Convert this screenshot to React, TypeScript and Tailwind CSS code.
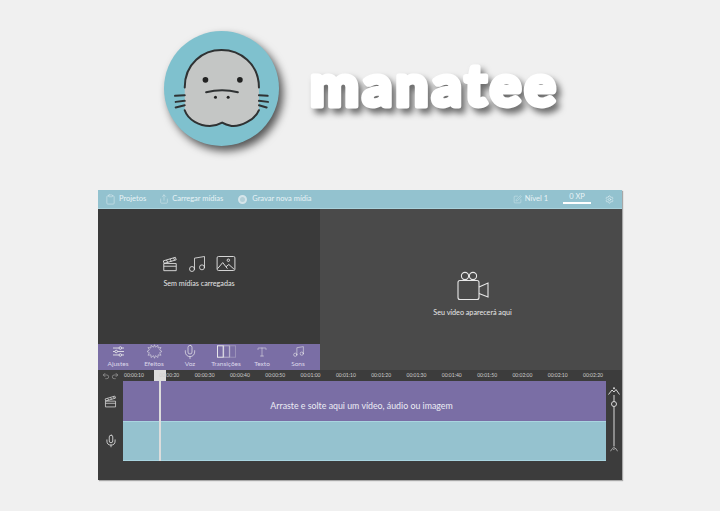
import React from "react";
import { Clipboard, Share, Music, Mic, Type, Settings, SquarePen, Undo2, Redo2 } from "lucide-react";

const RULER = ["00:00:10", "00:00:20", "00:00:30", "00:00:40", "00:00:50", "00:01:00", "00:01:10", "00:01:20", "00:01:30", "00:01:40", "00:01:50", "00:02:00", "00:02:10", "00:02:20"];

const Manatee = () => (
  <svg viewBox="0 0 344 344" className="w-full h-full">
    <g transform="translate(-13 -3)" fill="none" stroke="#2f3233" strokeLinecap="round">
      <path d="M75 172C75 100 130 60 185 60C240 60 297 100 297 172L297 240C285 270 240 290 215 287C205 285 195 282 187 277C178 282 165 287 150 287C120 287 85 270 75 240Z" fill="#c4c6c5" stroke="none" />
      <path d="M75 172C75 100 130 60 185 60C240 60 297 100 297 172" strokeWidth="6" />
      <path d="M297 240C285 270 240 290 215 287C205 285 195 282 187 277C178 282 165 287 150 287C120 287 85 270 75 240" strokeWidth="6" />
      <path d="M139 186Q187 174 234 186" strokeWidth="6" />
      <path d="M46 197L75 195M48 215L75 212M48 232L75 225M297 195L323 197M297 212L324 215M297 225L320 232" strokeWidth="6" />
      <g fill="#222" stroke="none">
        <circle cx="137" cy="149" r="8.5" />
        <circle cx="240" cy="149" r="8.5" />
        <circle cx="167" cy="201" r="4.5" />
        <circle cx="205" cy="201" r="4.5" />
      </g>
    </g>
  </svg>
);

const Wordmark = () => (
  <svg width="260" height="70" className="overflow-visible [filter:drop-shadow(4px_5px_3px_rgba(0,0,0,0.55))]">
    <text x="5" y="51" fontFamily="Lato, sans-serif" fontWeight="900" fontSize="58" letterSpacing="3.5" fill="#fff" stroke="#fff" strokeWidth="5" strokeLinejoin="round">
      manatee
    </text>
  </svg>
);

const Clapper = ({ className = "" }: { className?: string }) => (
  <svg viewBox="0 0 18 18" fill="none" stroke="currentColor" strokeWidth="1" className={className}>
    <path d="M2 8.5h14v8H2z" />
    <path d="M2 11.5h14" />
    <path d="M1.5 5.5L15 1.5l1 2.8L2.4 8.3z" />
    <path d="M5 4.5l1.5 2.7M9 3.3l1.5 2.7M13 2.2l1.2 2.6" />
  </svg>
);

const Picture = ({ className = "" }: { className?: string }) => (
  <svg viewBox="0 0 20 16" fill="none" stroke="currentColor" strokeWidth="1" className={className}>
    <rect x="0.5" y="0.5" width="19" height="15" rx="1.5" />
    <path d="M1 13.5L6.5 7l5 6.5M10 11.5l3-2.5 5.5 5" />
    <circle cx="12.5" cy="4.5" r="1.3" />
  </svg>
);

const Camera = ({ className = "" }: { className?: string }) => (
  <svg viewBox="0 0 32 30" fill="none" stroke="currentColor" strokeWidth="1.1" className={className}>
    <circle cx="8" cy="5" r="3.6" />
    <circle cx="16" cy="5" r="3.6" />
    <rect x="1" y="9.5" width="21" height="19" rx="2" />
    <path d="M22 16l9-4v14l-9-3.5" />
  </svg>
);

const Sliders = ({ className = "" }: { className?: string }) => (
  <svg viewBox="0 0 12 11" fill="none" stroke="currentColor" strokeWidth="0.9" className={className}>
    <path d="M0 1.7h6.5M9.5 1.7H12M0 5.5h2M5 5.5h7M0 9.3h6.5M9.5 9.3H12" />
    <circle cx="8" cy="1.7" r="1.4" />
    <circle cx="3.5" cy="5.5" r="1.4" />
    <circle cx="8" cy="9.3" r="1.4" />
  </svg>
);

const Burst = ({ className = "" }: { className?: string }) => (
  <svg viewBox="0 0 20 20" fill="none" stroke="currentColor" strokeWidth="0.7" className={className}>
    <path d="M10 1l1.4 3.3L14.5 1.8l.3 3.5 3.9-.6-1.9 3.2L20 10l-3.2 1.6 1.9 3.4-3.9-.6-.3 3.6-3.1-2.5L10 19l-1.4-3.5-3.1 2.5-.3-3.6-3.9.6 1.9-3.4L0 10l3.2-2.1-1.9-3.2 3.9.6.3-3.5 3.1 2.5z" />
  </svg>
);

const Transitions = ({ className = "" }: { className?: string }) => (
  <svg viewBox="0 0 20 13" fill="none" stroke="currentColor" className={className}>
    <rect x="0.5" y="0.5" width="6" height="12" strokeWidth="1" />
    <rect x="7" y="0.5" width="6" height="12" strokeWidth="1" opacity="0.55" />
    <rect x="13.5" y="0.5" width="6" height="12" strokeWidth="1" opacity="0.3" />
  </svg>
);

const Altitude = ({ className = "" }: { className?: string }) => (
  <svg viewBox="0 0 12 8" fill="none" stroke="currentColor" strokeWidth="1" className={className}>
    <path d="M0.5 7.5L4 3l2 2 2-2.5 3.5 5" />
    <circle cx="6" cy="1.2" r="1" fill="currentColor" stroke="none" />
  </svg>
);

const TopItem = ({ icon, children }: { icon: React.ReactNode; children: React.ReactNode }) => (
  <div className="flex items-center gap-[3px]">
    {icon}
    <span>{children}</span>
  </div>
);

const Tool = ({ icon, label }: { icon: React.ReactNode; label: string }) => (
  <div className="w-[36px] flex flex-col items-center">
    <div className="h-[15px] flex items-center justify-center text-[#eeeeee]">{icon}</div>
    <span className="text-[6.5px] leading-[9px] text-[#dcd8ea] whitespace-nowrap">{label}</span>
  </div>
);

export default function App() {
  return (
    <div className="w-[720px] h-[511px] bg-[#f0f0f0] flex flex-col font-['Lato',sans-serif] overflow-hidden">
      <header className="h-[190px] flex items-start pl-[164px] pt-[31px] gap-[26px]">
        <div className="w-[115px] h-[115px] rounded-full bg-[#7fc1ce] shadow-[4px_5px_8px_rgba(0,0,0,0.65)] shrink-0">
          <Manatee />
        </div>
        <div className="mt-[24px]">
          <Wordmark />
        </div>
      </header>

      <main className="ml-[98px] w-[524px] h-[290px] bg-[#3c3c3c] flex flex-col relative shadow-[1px_1px_1px_rgba(0,0,0,0.3)]">
        <div className="h-[19px] bg-[#93c2cf] border-b border-[#a9d2dc] flex items-center justify-between pl-[7px] pr-[8px] text-[7.5px] text-[#e8f3f6]">
          <div className="flex items-center gap-[13px]">
            <TopItem icon={<Clipboard size={11} strokeWidth={1} />}>Projetos</TopItem>
            <TopItem icon={<Share size={10} strokeWidth={1} />}>Carregar mídias</TopItem>
            <TopItem icon={<span className="w-[9px] h-[9px] ml-[2px] mr-[2px] rounded-full bg-[#b4d0d8] border-2 border-[#d5e5ea]" />}>Gravar nova mídia</TopItem>
          </div>
          <div className="flex items-center">
            <TopItem icon={<SquarePen size={9} strokeWidth={1} />}>Nível 1</TopItem>
            <div className="ml-[15px] w-[28px] flex flex-col items-center">
              <span className="text-[7.5px] leading-[9px] mb-[1px] -mt-[3px]">0 XP</span>
              <div className="h-[2px] w-full bg-white" />
            </div>
            <Settings size={9} strokeWidth={1.5} className="ml-[14px]" />
          </div>
        </div>

        <div className="flex h-[161px]">
          <div className="w-[222px] flex flex-col">
            <div className="flex-1 bg-[#3a3a3a] flex flex-col items-center pt-[46px] pr-[20px] text-[#e4e4e4]">
              <div className="flex items-center gap-[9px] h-[17px]">
                <Clapper className="w-[16px] h-[16px]" />
                <Music size={20} strokeWidth={1} />
                <Picture className="w-[20px] h-[15px]" />
              </div>
              <span className="mt-[7px] text-[7.2px] leading-[10px]">Sem mídias carregadas</span>
            </div>
            <div className="h-[26px] bg-[#7a6ea5] flex items-center pl-[2px] pb-[2px]">
              <Tool icon={<Sliders className="w-[11px] h-[11px]" />} label="Ajustes" />
              <Tool icon={<Burst className="w-[15px] h-[15px]" />} label="Efeitos" />
              <Tool icon={<Mic size={16} strokeWidth={1} />} label="Voz" />
              <Tool icon={<Transitions className="w-[19px] h-[13px]" />} label="Transições" />
              <Tool icon={<Type size={12} strokeWidth={1} />} label="Texto" />
              <Tool icon={<Music size={13} strokeWidth={1} />} label="Sons" />
            </div>
          </div>
          <div className="flex-1 bg-[#4a4a4a] flex flex-col items-center pt-[62px] pl-[3px] text-[#e8e8e8]">
            <Camera className="w-[32px] h-[30px]" />
            <span className="mt-[7px] text-[7.2px] leading-[10px]">Seu vídeo aparecerá aqui</span>
          </div>
        </div>

        <div className="h-[11px] flex items-center text-[#cfcfcf] relative z-10">
          <div className="w-[25px] flex items-center justify-center gap-[1px] text-[#e0e0e0]">
            <Undo2 size={8} strokeWidth={1.2} />
            <Redo2 size={8} strokeWidth={1.2} />
          </div>
          <div className="w-[483px] flex justify-between pl-[1px] pr-[3px] text-[5px]">
            {RULER.map((t) => (
              <span key={t} className="whitespace-nowrap">{t}</span>
            ))}
          </div>
        </div>

        <div className="flex h-[80px]">
          <div className="w-[25px] flex flex-col text-[#e4e4e4]">
            <div className="h-[40px] flex items-center justify-center">
              <Clapper className="w-[13px] h-[13px]" />
            </div>
            <div className="h-[40px] flex items-center justify-center">
              <Mic size={14} strokeWidth={1.4} />
            </div>
          </div>
          <div className="w-[483px] flex flex-col">
            <div className="h-[40px] bg-[#7a6ea5] flex items-center justify-center pt-[10px] pr-[6px] text-[8.8px] text-[#ececf4]">
              Arraste e solte aqui um vídeo, áudio ou imagem
            </div>
            <div className="h-[40px] bg-[#95c2cf] border-t border-b border-[#a9d5e0]" />
          </div>
          <div className="w-[16px] flex flex-col items-center text-[#d8d8d8]">
            <Altitude className="w-[12px] h-[8px] mt-[6px]" />
            <div className="relative w-[2px] flex-1 bg-[#8a8a8a]">
              <span className="absolute left-[-2px] top-[6px] w-[6px] h-[6px] rounded-full border border-[#d8d8d8] bg-[#3c3c3c]" />
            </div>
            <Altitude className="w-[8px] h-[6px] mb-[9px]" />
          </div>
        </div>

        <div className="absolute left-[56px] top-[180px] w-[12px] h-[11px] bg-[#dcdcdc]" />
        <div className="absolute left-[61px] top-[191px] w-[2px] h-[80px] bg-[#dcdcdc]" />
      </main>
    </div>
  );
}
